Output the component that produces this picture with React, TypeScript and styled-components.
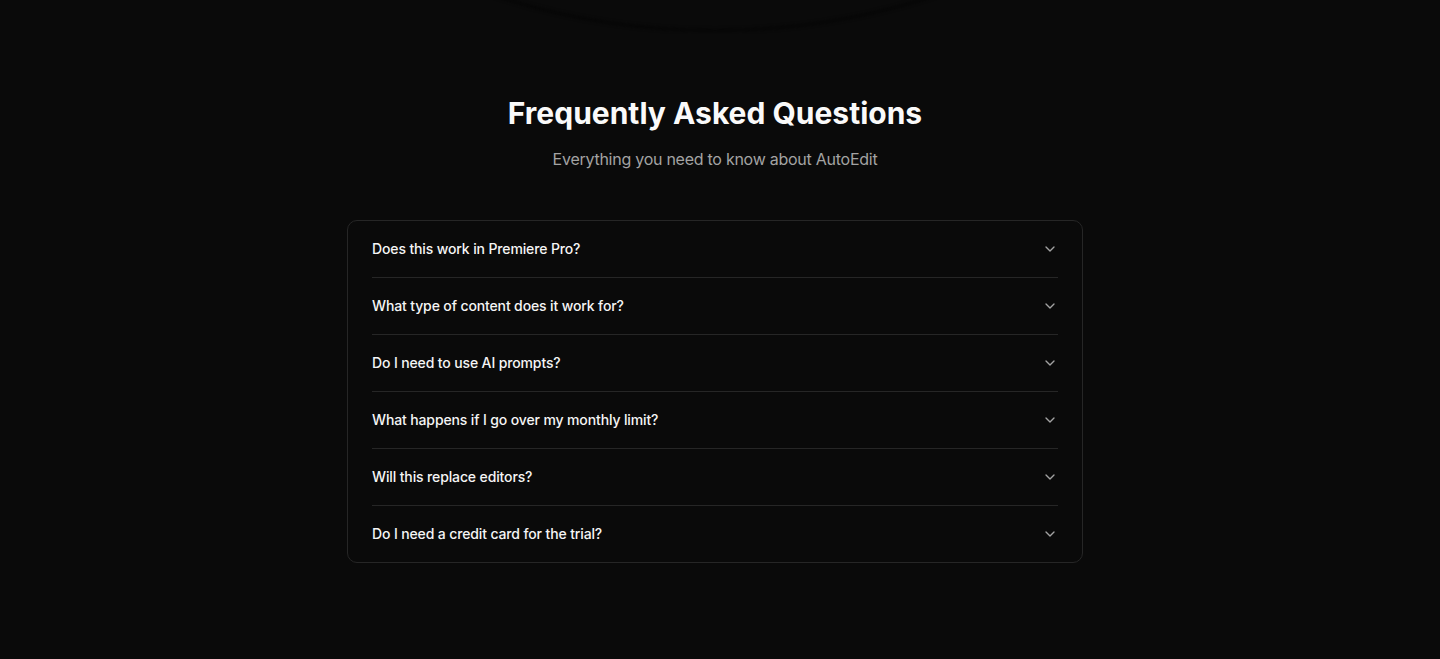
import React from "react";
import styled, { createGlobalStyle } from "styled-components";
import { ChevronDown } from "lucide-react";

const GlobalStyle = createGlobalStyle`
  html, body {
    margin: 0;
    padding: 0;
    background: #0a0a0a;
    color: #fafafa;
    font-family: Inter, "Noto Sans", "Liberation Sans", sans-serif;
    -webkit-font-smoothing: antialiased;
  }
  * { box-sizing: border-box; }
`;

const Page = styled.div`
  min-height: 659px;
  background: #0a0a0a;
  padding-right: 10px;
  overflow: hidden;
`;

const PrevEdge = styled.div`
  height: 34px;
  display: flex;
  justify-content: center;
  overflow: hidden;
`;

const Orb = styled.div`
  flex: none;
  width: 1430px;
  height: 1430px;
  margin-top: -1398px;
  border-radius: 50%;
  border: 3px solid #060606;
  filter: blur(1.5px);
`;

const Section = styled.section`
  display: flex;
  flex-direction: column;
  align-items: center;
  padding: 61px 24px 96px;
`;

const Title = styled.h2`
  margin: 0;
  font-size: 30px;
  line-height: 36px;
  font-weight: 700;
  letter-spacing: 0;
  color: #fafafa;
`;

const Subtitle = styled.p`
  margin: 16px 0 0;
  font-size: 16px;
  line-height: 24px;
  letter-spacing: -0.26px;
  color: #a3a3a3;
`;

const Card = styled.div`
  margin-top: 49px;
  width: 736px;
  border: 1px solid #262626;
  border-radius: 10px;
  padding: 0 24px;
  background: #0a0a0a;
`;

const Item = styled.div<{ $last?: boolean }>`
  border-bottom: ${(p) => (p.$last ? "none" : "1px solid #262626")};
`;

const Trigger = styled.button`
  all: unset;
  box-sizing: border-box;
  width: 100%;
  height: 56px;
  padding-bottom: 1px;
  display: flex;
  align-items: center;
  justify-content: space-between;
  cursor: pointer;
  font-family: Inter, "Noto Sans", "Liberation Sans", sans-serif;
  font-size: 14px;
  font-weight: 500;
  letter-spacing: -0.13px;
  color: #f5f5f5;
`;

const Chevron = styled(ChevronDown)`
  flex: none;
  color: #a3a3a3;
`;

const questions = [
  "Does this work in Premiere Pro?",
  "What type of content does it work for?",
  "Do I need to use AI prompts?",
  "What happens if I go over my monthly limit?",
  "Will this replace editors?",
  "Do I need a credit card for the trial?",
];

export default function App() {
  return (
    <>
      <GlobalStyle />
      <Page>
        <PrevEdge>
          <Orb />
        </PrevEdge>
        <Section>
          <Title>Frequently Asked Questions</Title>
          <Subtitle>Everything you need to know about AutoEdit</Subtitle>
          <Card>
            {questions.map((q, i) => (
              <Item key={q} $last={i === questions.length - 1}>
                <Trigger type="button">
                  <span>{q}</span>
                  <Chevron size={16} strokeWidth={2} />
                </Trigger>
              </Item>
            ))}
          </Card>
        </Section>
      </Page>
    </>
  );
}
